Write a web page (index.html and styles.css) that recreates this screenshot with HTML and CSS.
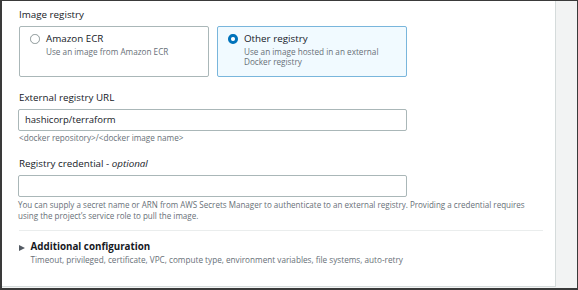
FILE: index.html
```html
<!DOCTYPE html>
<html>
<head>
<meta charset="utf-8">
<link rel="stylesheet" href="styles.css">
</head>
<body>
<div class="frame">
  <div class="card">
    <div class="label">Image registry</div>
    <div class="tiles">
      <div class="tile">
        <span class="radio"></span>
        <div class="tile-body">
          <div class="tile-title">Amazon ECR</div>
          <div class="desc">Use an image from Amazon ECR</div>
        </div>
      </div>
      <div class="tile selected">
        <span class="radio checked"></span>
        <div class="tile-body">
          <div class="tile-title">Other registry</div>
          <div class="desc">Use an image hosted in an external<br>Docker registry</div>
        </div>
      </div>
    </div>

    <div class="label gap-top">External registry URL</div>
    <div class="input">hashicorp/terraform</div>
    <div class="hint">&lt;docker repository&gt;/&lt;docker image name&gt;</div>

    <div class="label gap-top2">Registry credential - <i>optional</i></div>
    <div class="input"></div>
    <div class="help">You can supply a secret name or ARN from AWS Secrets Manager to authenticate to an external registry. Providing a credential requires using the project’s service role to pull the image.</div>

    <div class="divider"></div>

    <div class="expander">
      <span class="caret"></span>
      <div>
        <div class="exp-title">Additional configuration</div>
        <div class="desc">Timeout, privileged, certificate, VPC, compute type, environment variables, file systems, auto-retry</div>
      </div>
    </div>
  </div>
</div>
</body>
</html>
```
FILE: styles.css
```css
html, body {
  margin: 0;
  padding: 0;
}
body {
  font-family: "Open Sans", "Noto Sans", sans-serif;
  color: #16191f;
}
.frame {
  box-sizing: border-box;
  width: 578px;
  height: 290px;
  border: 1px solid #3a3a3a;
  border-left-width: 2px;
  border-bottom-width: 2px;
  background: #f2f3f3;
  display: flex;
  padding: 0 21px 1px 0;
}
.card {
  flex: 1;
  background: #ffffff;
  border-right: 1px solid #d5dbdb;
  border-bottom: 1px solid #d5dbdb;
  padding: 6.5px 12px 0 17px;
}
.label {
  font-size: 9.8px;
  line-height: 14px;
}
.label i {
  font-style: italic;
}
.gap-top {
  margin-top: 14px;
}
.gap-top2 {
  margin-top: 14px;
}
.tiles {
  margin-top: 4.2px;
  width: 388px;
  display: grid;
  grid-template-columns: 1fr 1fr;
  column-gap: 8px;
}
.tile {
  box-sizing: border-box;
  height: 51.6px;
  border: 1px solid #aab7b8;
  border-radius: 2px;
  padding: 5px 10px 0 10px;
  display: flex;
  gap: 6.5px;
  align-items: flex-start;
}
.tile.selected {
  background: #f1faff;
  border-color: #79b6dc;
}
.radio {
  box-sizing: border-box;
  flex: none;
  width: 9.5px;
  height: 9.5px;
  margin-top: 2.6px;
  border-radius: 50%;
  border: 1px solid #8d9899;
  background: #fff;
}
.radio.checked {
  border: 3px solid #0073bb;
}
.tile-title {
  font-size: 9.8px;
  line-height: 14px;
}
.desc {
  font-size: 8.2px;
  line-height: 10.7px;
  color: #687078;
  margin-top: 1px;
}
.input {
  box-sizing: border-box;
  margin-top: 4px;
  width: 389px;
  margin-left: -1px;
  height: 21.5px;
  border: 1px solid #aab7b8;
  border-radius: 2px;
  padding: 0 6px;
  font-size: 9.5px;
  line-height: 19.5px;
  color: #16191f;
}
.hint {
  font-size: 8.2px;
  line-height: 11px;
  color: #687078;
  margin-top: 1.6px;
}
.help {
  font-size: 8.05px;
  line-height: 10.8px;
  color: #687078;
  margin-top: 3.3px;
  margin-left: -1px;
}
.divider {
  height: 1px;
  background: #eaeded;
  margin-top: 8.4px;
}
.expander {
  margin-top: 9.2px;
  display: flex;
  gap: 5.5px;
  align-items: flex-start;
}
.caret {
  flex: none;
  width: 0;
  height: 0;
  margin-top: 4.3px;
  border-top: 3.4px solid transparent;
  border-bottom: 3.4px solid transparent;
  border-left: 6.5px solid #545b64;
}
.exp-title {
  font-size: 9.8px;
  line-height: 14px;
  font-weight: 700;
}
.expander .desc {
  margin-top: 0.8px;
}
```
